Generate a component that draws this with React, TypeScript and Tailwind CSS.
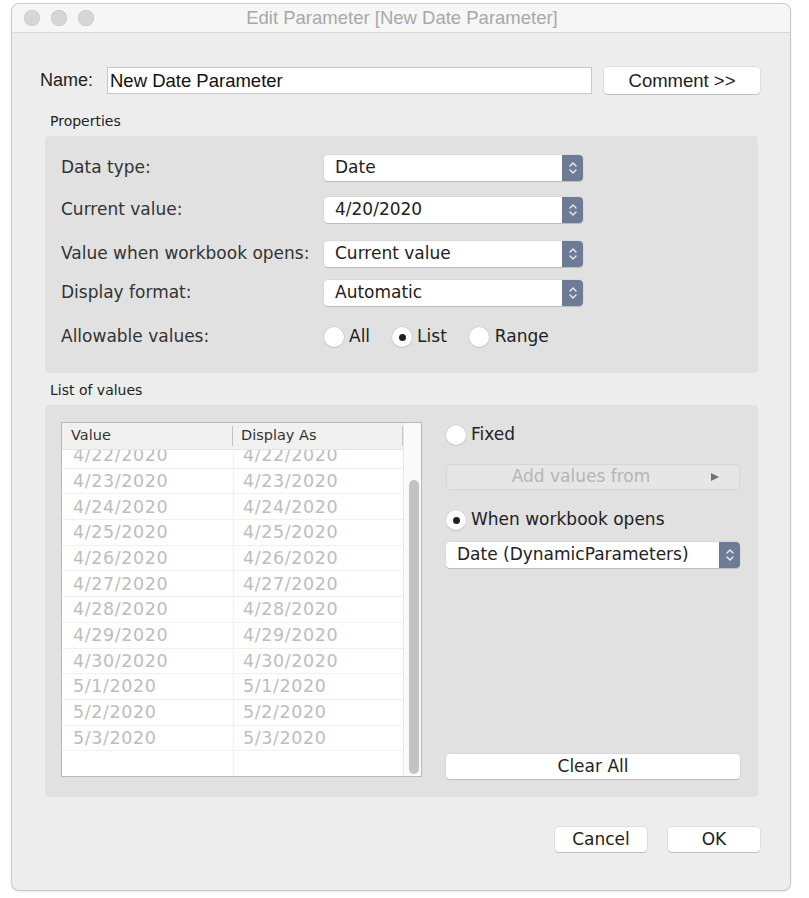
import React from "react";

const LG = "font-['DejaVu_Sans',sans-serif]";
const HV = "font-['Liberation_Sans',Arial,sans-serif]";

function Stepper() {
  return (
    <div className="w-[21px] self-stretch rounded-r-[4px] bg-[#6e7b97] flex items-center justify-center">
      <svg width="10" height="16" viewBox="0 0 10 16" fill="none" stroke="#e9edf5" strokeWidth="1.4" strokeLinecap="round" strokeLinejoin="round">
        <path d="M2 6 L5 3 L8 6" />
        <path d="M2 10 L5 13 L8 10" />
      </svg>
    </div>
  );
}

function Select({ value, width }: { value: string; width: string }) {
  return (
    <div className={`${width} h-[26px] flex bg-white rounded-[4px] shadow-[0_1px_0_#bdbdbd,0_0_0_0.5px_#d2d2d2]`}>
      <div className={`flex-1 flex items-center pl-[11px] text-[17px] text-[#222] ${LG}`}>{value}</div>
      <Stepper />
    </div>
  );
}

function Radio({ checked }: { checked?: boolean }) {
  return (
    <div className="w-[20px] h-[20px] rounded-full bg-white shadow-[0_0_0_0.5px_#c4c4c4,0_1px_1px_#c8c8c8] flex items-center justify-center shrink-0">
      {checked && <div className="w-[7px] h-[7px] rounded-full bg-[#222]" />}
    </div>
  );
}

function Btn({ label, width, className = "" }: { label: string; width: string; className?: string }) {
  return (
    <div className={`${width} h-[25px] bg-white rounded-[4px] shadow-[0_1px_0_#bdbdbd,0_0_0_0.5px_#d0d0d0] flex items-center justify-center text-[17px] text-[#222] ${className}`}>
      {label}
    </div>
  );
}

const dates = [
  "4/22/2020",
  "4/23/2020",
  "4/24/2020",
  "4/25/2020",
  "4/26/2020",
  "4/27/2020",
  "4/28/2020",
  "4/29/2020",
  "4/30/2020",
  "5/1/2020",
  "5/2/2020",
  "5/3/2020",
];

export default function App() {
  return (
    <div className="w-[809px] h-[898px] bg-white overflow-hidden pt-[4px] pl-[12px]">
      <div className="w-[778px] h-[886px] rounded-[7px] bg-[#ededed] shadow-[0_0_0_1px_#c9c9c9,0_1px_3px_rgba(0,0,0,0.2)] flex flex-col overflow-hidden">
        {/* title bar */}
        <div className="h-[29px] bg-[#f6f6f6] border-b border-[#d9d9d9] relative flex items-center justify-center shrink-0">
          <div className="absolute left-[12px] top-[6px] flex gap-[11px]">
            <div className="w-[16px] h-[16px] rounded-full bg-[#d6d6d6] shadow-[inset_0_0_0_0.5px_#c8c8c8]" />
            <div className="w-[16px] h-[16px] rounded-full bg-[#d6d6d6] shadow-[inset_0_0_0_0.5px_#c8c8c8]" />
            <div className="w-[16px] h-[16px] rounded-full bg-[#d6d6d6] shadow-[inset_0_0_0_0.5px_#c8c8c8]" />
          </div>
          <div className={`${HV} text-[18.5px] text-[#a8a8a8] pl-[2px]`}>Edit Parameter [New Date Parameter]</div>
        </div>

        {/* name row */}
        <div className="flex items-center mt-[34px] pl-[28px] h-[27px]">
          <div className={`${HV} text-[18px] text-[#222] w-[67px]`}>Name:</div>
          <div className={`w-[485px] h-[27px] bg-white border border-[#c9c9c9] flex items-center pl-[2px] ${HV} text-[18.5px] text-[#111]`}>
            New Date Parameter
          </div>
          <div className={`ml-[12px] w-[156px] h-[27px] bg-white rounded-[4px] shadow-[0_1px_0_#bdbdbd,0_0_0_0.5px_#d0d0d0] flex items-center justify-center ${HV} text-[18.5px] text-[#222]`}>
            Comment &gt;&gt;
          </div>
        </div>

        {/* properties */}
        <div className={`${LG} text-[14px] text-[#222] pl-[38px] mt-[19px] h-[16px] leading-[16px]`}>Properties</div>
        <div className={`ml-[33px] mt-[7px] w-[713px] h-[237px] bg-[#e1e1e1] rounded-[4px] ${LG} pl-[16px] pt-[19px]`}>
          {[
            ["Data type:", "Date", "mt-0"],
            ["Current value:", "4/20/2020", "mt-[16px]"],
            ["Value when workbook opens:", "Current value", "mt-[18px]"],
            ["Display format:", "Automatic", "mt-[13px]"],
          ].map(([label, value, mt]) => (
            <div key={label} className={`flex items-center ${mt}`}>
              <div className="w-[263px] text-[17px] text-[#333]">{label}</div>
              <Select value={value} width="w-[259px]" />
            </div>
          ))}
          <div className="flex items-center mt-[18px] h-[26px]">
            <div className="w-[263px] text-[17px] text-[#333]">Allowable values:</div>
            <div className="flex items-center text-[17px] text-[#222]">
              <Radio />
              <span className="ml-[5px]">All</span>
              <div className="ml-[22px]"><Radio checked /></div>
              <span className="ml-[5px]">List</span>
              <div className="ml-[22px]"><Radio /></div>
              <span className="ml-[6px]">Range</span>
            </div>
          </div>
        </div>

        {/* list of values */}
        <div className={`${LG} text-[14px] text-[#222] pl-[38px] mt-[9px] h-[16px] leading-[16px]`}>List of values</div>
        <div className={`ml-[33px] mt-[7px] w-[713px] h-[392px] bg-[#e1e1e1] rounded-[4px] ${LG} flex pl-[16px] pt-[17px]`}>
          {/* table */}
          <div className="w-[361px] h-[355px] bg-white border border-[#b9b9b9] flex">
            <div className="flex-1 flex flex-col">
              <div className="h-[27px] bg-[#f1f1f1] border-b border-[#e4e4e4] flex items-center text-[14.5px] text-[#333] shrink-0">
                <div className="w-[171px] h-[20px] border-r border-[#c4c4c4] pl-[9px] flex items-center">Value</div>
                <div className="flex-1 h-[20px] border-r border-[#c4c4c4] pl-[8px] flex items-center">Display As</div>
              </div>
              <div className="flex-1 overflow-hidden relative">
                <div className="absolute left-[171px] top-0 bottom-0 w-px bg-[#f0f0f0]" />
                <div className="-mt-[7px]">
                  {dates.map((d) => (
                    <div key={d} className="h-[25.7px] border-b border-[#f0f0f0] flex items-center text-[17.5px] text-[#bdbdbd] tracking-[0.6px]">
                      <div className="w-[171px] pl-[11px]">{d}</div>
                      <div className="flex-1 pl-[10px]">{d}</div>
                    </div>
                  ))}
                </div>
              </div>
            </div>
            <div className="w-[18px] border-l border-[#e8e8e8] bg-[#fafafa] relative shrink-0">
              <div className="absolute left-[5px] top-[57px] w-[10px] h-[294px] rounded-full bg-[#c3c3c3]" />
            </div>
          </div>

          {/* right side */}
          <div className="ml-[24px] w-[294px] flex flex-col">
            <div className="flex items-center h-[20px] mt-[3px] text-[17px] text-[#222]">
              <Radio />
              <span className="ml-[5px]">Fixed</span>
            </div>
            <div className="mt-[19px] h-[26px] rounded-[4px] bg-[#e6e6e6] border border-[#d6d6d6] flex items-center relative">
              <div className="flex-1 text-center text-[17px] text-[#b5b5b5] pr-[24px]">Add values from</div>
              <svg className="absolute right-[19px]" width="10" height="10" viewBox="0 0 10 10">
                <path d="M1 1 L9 5 L1 9 Z" fill="#707070" />
              </svg>
            </div>
            <div className="flex items-center h-[20px] mt-[20px] text-[17px] text-[#222]">
              <Radio checked />
              <span className="ml-[5px]">When workbook opens</span>
            </div>
            <div className="mt-[12px]">
              <Select value="Date (DynamicParameters)" width="w-[294px]" />
            </div>
            <div className="mt-auto mb-[18px]">
              <Btn label="Clear All" width="w-[294px]" />
            </div>
          </div>
        </div>

        {/* bottom buttons */}
        <div className={`flex justify-end gap-[21px] pr-[30px] mt-[30px] ${LG}`}>
          <Btn label="Cancel" width="w-[92px]" />
          <Btn label="OK" width="w-[92px]" />
        </div>
      </div>
    </div>
  );
}
